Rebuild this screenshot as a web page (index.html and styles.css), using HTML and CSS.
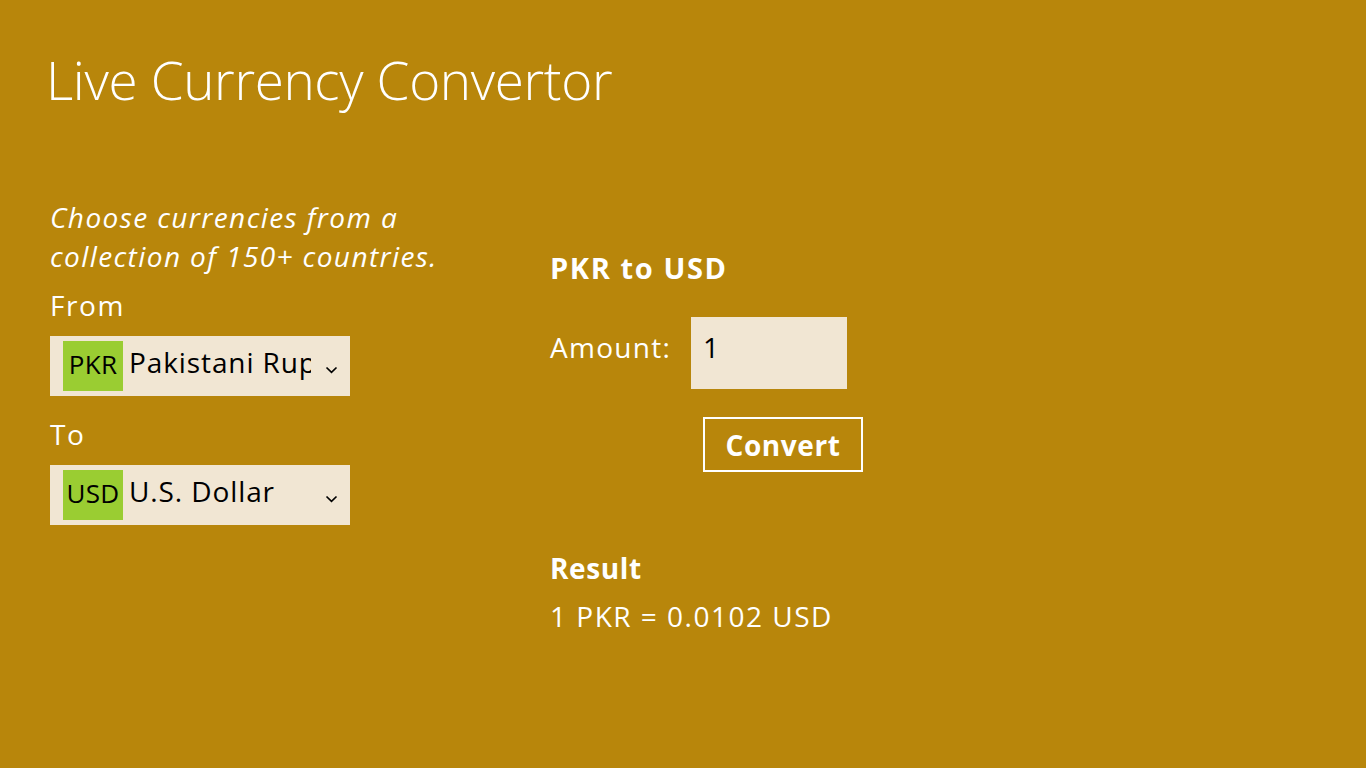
FILE: index.html
```html
<!DOCTYPE html>
<html>
<head>
<meta charset="utf-8">
<link rel="stylesheet" href="styles.css">
</head>
<body>
<div class="app">
  <h1 class="title">Live Currency Convertor</h1>
  <div class="main">
    <div class="left">
      <p class="intro">Choose currencies from a collection of 150+ countries.</p>
      <div class="label">From</div>
      <div class="select">
        <span class="code">PKR</span>
        <span class="name">Pakistani Rupee</span>
        <svg class="chev" width="13" height="8" viewBox="0 0 13 8"><path d="M1.5 1.5 L6.5 6.3 L11.5 1.5" fill="none" stroke="#000" stroke-width="1.7"/></svg>
      </div>
      <div class="label to">To</div>
      <div class="select">
        <span class="code">USD</span>
        <span class="name">U.S. Dollar</span>
        <svg class="chev" width="13" height="8" viewBox="0 0 13 8"><path d="M1.5 1.5 L6.5 6.3 L11.5 1.5" fill="none" stroke="#000" stroke-width="1.7"/></svg>
      </div>
    </div>
    <div class="right">
      <div class="pair">PKR to USD</div>
      <div class="amount-row">
        <span class="amount-label">Amount:</span>
        <div class="amount-input">1</div>
      </div>
      <div class="btn-row"><button class="convert">Convert</button></div>
      <div class="result-title">Result</div>
      <div class="result">1 PKR = 0.0102 USD</div>
    </div>
  </div>
</div>
</body>
</html>
```

FILE: styles.css
```css
html, body {
  margin: 0;
  padding: 0;
  background: #b8860b;
}
body {
  font-family: "Segoe UI", "Open Sans", "Noto Sans", sans-serif;
  color: #ffffff;
  width: 1366px;
  height: 768px;
  overflow: hidden;
}
.app {
  padding: 45px 0 0 46px;
}
.title {
  margin: 0;
  font-weight: 300;
  font-size: 53px;
  line-height: 70px;
  letter-spacing: -0.35px;
}
.main {
  display: flex;
  margin-top: 83px;
}
.left {
  width: 400px;
  padding-left: 4px;
}
.intro {
  margin: 0;
  font-style: italic;
  font-size: 28px;
  line-height: 39px;
  letter-spacing: 1.4px;
  width: 420px;
}
.label {
  font-size: 28px;
  line-height: 40px;
  letter-spacing: 1.6px;
  margin-top: 9px;
}
.label.to {
  margin-top: 18px;
}
.select {
  width: 300px;
  height: 60px;
  background: #f1e6d3;
  margin-top: 11px;
  display: flex;
  align-items: center;
  padding-left: 13px;
  box-sizing: border-box;
  color: #000;
  overflow: hidden;
}
.code {
  background: #9acd32;
  width: 60px;
  height: 50px;
  display: flex;
  align-items: center;
  justify-content: center;
  font-size: 26px;
  letter-spacing: 0.3px;
  flex: none;
  padding-bottom: 4px;
  box-sizing: border-box;
}
.name {
  font-size: 28px;
  letter-spacing: 0.9px;
  margin-left: 6px;
  white-space: nowrap;
  overflow: hidden;
  width: 182px;
  flex: none;
  margin-top: -9px;
}
.chev {
  margin-left: 14px;
  margin-top: 8px;
}
.right {
  margin-left: 100px;
  padding-top: 50px;
}
.pair {
  font-weight: 700;
  font-size: 29px;
  letter-spacing: 1.6px;
  line-height: 40px;
}
.amount-row {
  display: flex;
  align-items: flex-start;
  margin-top: 29px;
}
.amount-label {
  font-size: 28px;
  letter-spacing: 1.3px;
  line-height: 40px;
  margin-top: 10px;
  width: 141px;
}
.amount-input {
  width: 156px;
  height: 72px;
  background: #f1e6d3;
  color: #000;
  font-size: 28px;
  line-height: 60px;
  padding-left: 12px;
  box-sizing: border-box;
}
.btn-row {
  padding-left: 153px;
  margin-top: 28px;
}
.convert {
  width: 160px;
  height: 55px;
  border: 2px solid #fff;
  background: transparent;
  color: #fff;
  font-family: inherit;
  font-weight: 700;
  font-size: 28px;
  letter-spacing: 0.6px;
  padding: 0;
}
.result-title {
  font-weight: 700;
  font-size: 28px;
  letter-spacing: 0.6px;
  line-height: 40px;
  margin-top: 76px;
}
.result {
  font-size: 28px;
  letter-spacing: 1.5px;
  line-height: 40px;
  margin-top: 8px;
}
```
